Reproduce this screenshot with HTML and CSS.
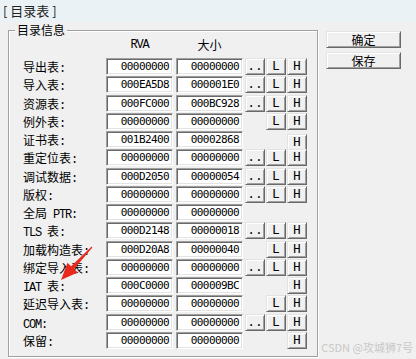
FILE: index.html
```html
<!DOCTYPE html>
<html lang="zh-CN">
<head>
    <meta charset="UTF-8">
    <title>目录表</title>
    <link rel="stylesheet" href="styles.css">
</head>
<body>
    <div class="titlebar">[ 目录表 ]</div>

    <div class="main">
        <div class="group">
            <div class="legend">目录信息</div>

            <div class="head">
                <span class="col-rva en">RVA</span>
                <span class="col-size">大小</span>
            </div>

            <div class="row"><span class="label">导出表<span class="en">:</span></span><span class="field">00000000</span><span class="field f2">00000000</span><button class="btn b-dots">..</button><button class="btn b-l">L</button><button class="btn b-h">H</button></div>
            <div class="row"><span class="label">导入表<span class="en">:</span></span><span class="field">000EA5D8</span><span class="field f2">000001E0</span><button class="btn b-dots">..</button><button class="btn b-l">L</button><button class="btn b-h">H</button></div>
            <div class="row"><span class="label">资源表<span class="en">:</span></span><span class="field">000FC000</span><span class="field f2">000BC928</span><button class="btn b-dots">..</button><button class="btn b-l">L</button><button class="btn b-h">H</button></div>
            <div class="row"><span class="label">例外表<span class="en">:</span></span><span class="field">00000000</span><span class="field f2">00000000</span><button class="btn b-l">L</button><button class="btn b-h">H</button></div>
            <div class="row"><span class="label">证书表<span class="en">:</span></span><span class="field">001B2400</span><span class="field f2">00002868</span><button class="btn b-h low">H</button></div>
            <div class="row"><span class="label">重定位表<span class="en">:</span></span><span class="field">00000000</span><span class="field f2">00000000</span><button class="btn b-dots">..</button><button class="btn b-l">L</button><button class="btn b-h">H</button></div>
            <div class="row"><span class="label">调试数据<span class="en">:</span></span><span class="field">000D2050</span><span class="field f2">00000054</span><button class="btn b-dots">..</button><button class="btn b-l">L</button><button class="btn b-h">H</button></div>
            <div class="row"><span class="label">版权<span class="en">:</span></span><span class="field">00000000</span><span class="field f2">00000000</span><button class="btn b-dots">..</button><button class="btn b-l">L</button><button class="btn b-h">H</button></div>
            <div class="row"><span class="label">全局<span class="en"> PTR:</span></span><span class="field">00000000</span><span class="field f2">00000000</span></div>
            <div class="row"><span class="label"><span class="en">TLS </span>表<span class="en">:</span></span><span class="field">000D2148</span><span class="field f2">00000018</span><button class="btn b-dots">..</button><button class="btn b-l">L</button><button class="btn b-h">H</button></div>
            <div class="row"><span class="label">加载构造表<span class="en">:</span></span><span class="field">000D20A8</span><span class="field f2">00000040</span><button class="btn b-l">L</button><button class="btn b-h">H</button></div>
            <div class="row"><span class="label">绑定导入表<span class="en">:</span></span><span class="field">00000000</span><span class="field f2">00000000</span><button class="btn b-dots">..</button><button class="btn b-l">L</button><button class="btn b-h">H</button></div>
            <div class="row"><span class="label"><span class="en">IAT </span>表<span class="en">:</span></span><span class="field">000C0000</span><span class="field f2">000009BC</span><button class="btn b-h">H</button></div>
            <div class="row"><span class="label">延迟导入表<span class="en">:</span></span><span class="field">00000000</span><span class="field f2">00000000</span><button class="btn b-l">L</button><button class="btn b-h">H</button></div>
            <div class="row"><span class="label"><span class="en">COM:</span></span><span class="field">00000000</span><span class="field f2">00000000</span><button class="btn b-dots">..</button><button class="btn b-l">L</button><button class="btn b-h">H</button></div>
            <div class="row"><span class="label">保留<span class="en">:</span></span><span class="field">00000000</span><span class="field f2">00000000</span><button class="btn b-h">H</button></div>
        </div>

        <div class="side">
            <button class="sbtn">确定</button>
            <button class="sbtn">保存</button>
        </div>
    </div>

    <div class="watermark">CSDN @攻城狮7号</div>

    <!-- 标注箭头 -->
    <svg class="arrow" width="416" height="359" viewBox="0 0 416 359">
        <polygon points="92.4,247.4 74.1,269 77.7,272.4 61,280 67.5,262.8 71.1,266.2 91.6,246.6" fill="#e8291c"/>
    </svg>
</body>
</html>
```

FILE: styles.css
```css
* {
    margin: 0;
    padding: 0;
    box-sizing: border-box;
}

body {
    width: 416px;
    height: 359px;
    overflow: hidden;
    position: relative;
    background: #f0f0f0;
    font-family: "Noto Sans CJK SC", sans-serif;
    font-size: 12px;
    color: #000;
}

/* 西文部分按等宽 6px 排 */
.en {
    font-family: "Liberation Mono", monospace;
    font-size: 12px;
    letter-spacing: -1.2px;
}

.titlebar {
    height: 22px;
    padding: 3px 0 0 3px;
    background: #eaf2f6;
    font-size: 13px;
    line-height: 16px;
    color: #222;
    border-top-right-radius: 6px;
}

.main {
    display: flex;
    align-items: flex-start;
}

/* 分组框 */
.group {
    width: 310px;
    height: 327px;
    margin: 8px 0 0 8px;
    padding-left: 14px;
    border: 1px solid #a0a0a0;
    box-shadow: 1px 1px 0 #fff, inset 1px 1px 0 #fff;
}

.legend {
    width: fit-content;
    margin: -9px 0 0 -8px;
    padding: 0 2px;
    background: #f0f0f0;
    line-height: 16px;
}

.head {
    display: grid;
    grid-template-columns: 83px 70px 69px;
    height: 20px;
    line-height: 14px;
}

.col-rva {
    grid-column: 2;
    width: 67px;
    text-align: center;
}

.col-size {
    grid-column: 3;
    width: 67px;
    text-align: center;
}

.row {
    display: grid;
    grid-template-columns: 83px 70px 69px 21px 21px 20px;
    height: 18.27px;
    align-items: start;
}

.label {
    grid-column: 1;
    line-height: 17px;
    white-space: nowrap;
}

.field {
    grid-column: 2;
    width: 67px;
    height: 17px;
    padding-right: 3px;
    background: #fff;
    border: 1px solid;
    border-color: #a0a0a0 #fff #fff #a0a0a0;
    box-shadow: inset 1px 1px 0 #696969, inset -1px -1px 0 #e3e3e3;
    font-family: "DejaVu Sans Mono", monospace;
    font-size: 11px;
    letter-spacing: -0.6px;
    line-height: 15px;
    text-align: right;
}

.f2 {
    grid-column: 3;
}

.btn {
    width: 20px;
    height: 17px;
    background: #f0f0f0;
    border: 1px solid;
    border-color: #e3e3e3 #696969 #696969 #e3e3e3;
    box-shadow: inset 1px 1px 0 #fff, inset -1px -1px 0 #a0a0a0;
    font-family: "Liberation Mono", monospace;
    font-size: 13px;
    line-height: 15px;
    text-align: center;
    color: #000;
}

.b-dots { grid-column: 4; }
.b-l { grid-column: 5; }
.b-h { grid-column: 6; }

.btn.low {
    margin-top: 3px;
}

.side {
    display: flex;
    flex-direction: column;
    gap: 4px;
    margin: 9px 0 0 8px;
}

.sbtn {
    width: 75px;
    height: 17px;
    background: #f0f0f0;
    border: 1px solid;
    border-color: #e3e3e3 #696969 #696969 #e3e3e3;
    box-shadow: inset 1px 1px 0 #fff, inset -1px -1px 0 #a0a0a0;
    font-family: "Noto Sans CJK SC", sans-serif;
    font-size: 12px;
    line-height: 15px;
    color: #000;
}

.watermark {
    position: absolute;
    right: 3px;
    bottom: 5px;
    color: #c8c8c8;
    font-size: 11px;
    line-height: 14px;
}

.arrow {
    position: absolute;
    left: 0;
    top: 0;
    pointer-events: none;
}
```
